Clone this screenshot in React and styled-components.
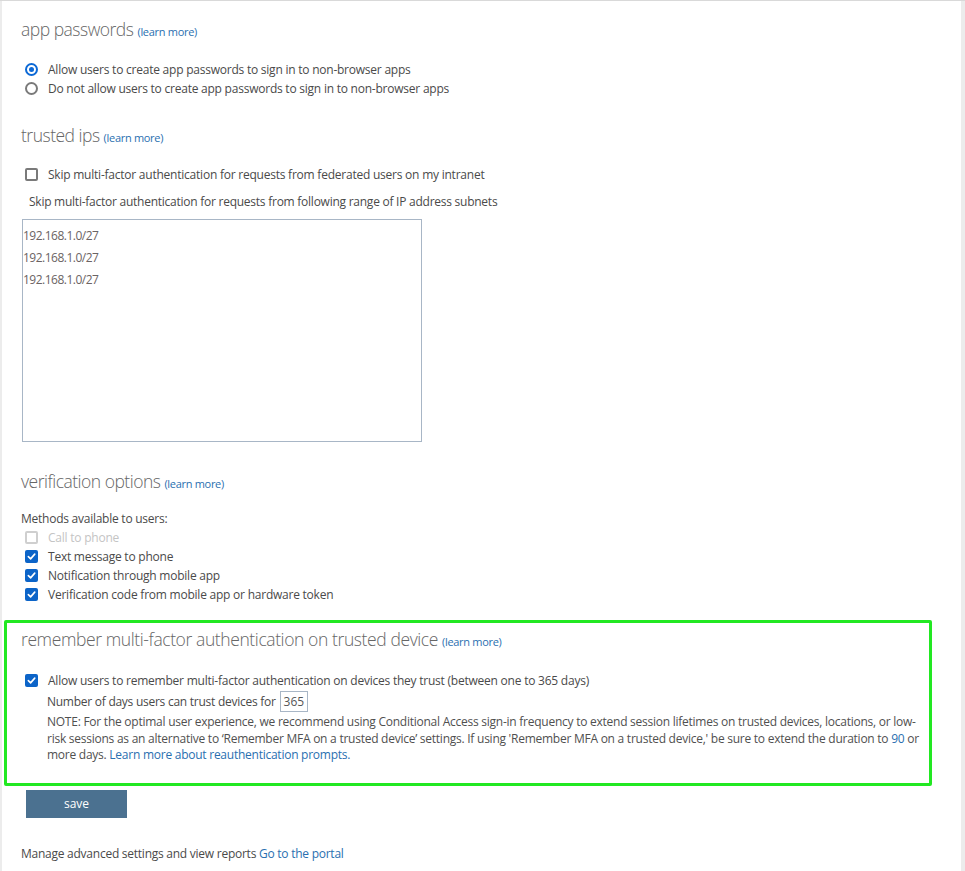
import React from "react";
import styled, { createGlobalStyle } from "styled-components";

const Global = createGlobalStyle`
  html, body { margin: 0; padding: 0; background: #fff; }
  body { font-family: "Open Sans", "Noto Sans", sans-serif; color: #4a4a4a; }
`;

const Frame = styled.div`
  display: flex;
  min-height: 871px;
  border-top: 1px solid #d9d9d9;
  box-sizing: border-box;
`;

const Main = styled.main`
  flex: 1;
  border-left: 2px solid #ececec;
  padding: 15px 29px 0 2px;
`;

const Gutter = styled.div`
  width: 4px;
  background: #ececec;
`;

const Section = styled.section`
  padding-left: 17px;
  margin-top: ${(p) => p.$top || 0}px;
`;

const Highlight = styled.section`
  border: 3px solid #22e822;
  border-radius: 2px;
  padding: 3px 0 19px 14px;
  margin-top: ${(p) => p.$top || 0}px;
`;

const Heading = styled.h2`
  margin: 0;
  font-weight: 300;
  font-size: 17.5px;
  letter-spacing: ${(p) => (p.$narrow ? -0.4 : -0.5)}px;
  line-height: 26px;
  height: 26px;
  color: #666;
`;

const Learn = styled.a`
  font-size: 11px;
  line-height: 1;
  font-weight: 400;
  letter-spacing: -0.3px;
  color: #2a6fb0;
  text-decoration: none;
  margin-left: 4px;
`;

const Group = styled.div`
  display: flex;
  flex-direction: column;
  margin-top: ${(p) => p.$top || 0}px;
`;

const Row = styled.label`
  display: flex;
  align-items: center;
  height: 19px;
  padding-left: 4px;
  font-size: 12px;
  color: ${(p) => (p.$disabled ? "#c4c4c4" : "#4a4a4a")};
`;

const Text = styled.span`
  margin-left: 10px;
  letter-spacing: -0.23px;
  white-space: nowrap;
`;

const Radio = styled.span`
  width: 13px;
  height: 13px;
  flex: none;
  box-sizing: border-box;
  border-radius: 50%;
  border: 2px solid ${(p) => (p.$on ? "#0c69d6" : "#7a7a7a")};
  display: flex;
  align-items: center;
  justify-content: center;
  &::after {
    content: "";
    width: 5px;
    height: 5px;
    border-radius: 50%;
    background: ${(p) => (p.$on ? "#0c69d6" : "transparent")};
  }
`;

const Box = styled.span`
  width: 13px;
  height: 13px;
  flex: none;
  box-sizing: border-box;
  border-radius: 2px;
  border: ${(p) => (p.$on ? "none" : `2px solid ${p.$disabled ? "#cfcfcf" : "#7a7a7a"}`)};
  background: ${(p) => (p.$on ? "#0c64c8" : "#fff")};
  display: flex;
  align-items: center;
  justify-content: center;
`;

const Check = ({ on, disabled }) => (
  <Box $on={on} $disabled={disabled}>
    {on && (
      <svg width="9" height="9" viewBox="0 0 10 10">
        <path d="M1.5 5.2 L4 7.6 L8.6 2.4" fill="none" stroke="#fff" strokeWidth="1.8" strokeLinecap="round" strokeLinejoin="round" />
      </svg>
    )}
  </Box>
);

const Plain = styled.div`
  font-size: 12px;
  line-height: 19px;
  height: 19px;
  letter-spacing: -0.25px;
  padding-left: ${(p) => p.$indent || 0}px;
  margin-top: ${(p) => p.$top || 0}px;
  color: #4a4a4a;
  white-space: nowrap;
`;

const IpList = styled.div`
  margin-top: 8px;
  margin-left: 1px;
  width: 400px;
  height: 223px;
  box-sizing: border-box;
  border: 1px solid #a8b6c6;
  padding-top: 5px;
  font-size: 12px;
  line-height: 22px;
  color: #6b6363;
  letter-spacing: -0.5px;
`;

const DaysRow = styled.div`
  display: flex;
  align-items: center;
  gap: 4px;
  height: 21px;
  margin-top: 1px;
  padding-left: 26px;
  font-size: 12px;
  letter-spacing: -0.26px;
`;

const DaysInput = styled.span`
  display: inline-block;
  height: 21px;
  box-sizing: border-box;
  border: 1px solid #a8b6c6;
  padding: 0 3px;
  line-height: 19px;
  color: #555;
  letter-spacing: 0;
`;

const Note = styled.p`
  margin: 2px 0 0 26px;
  padding-right: 2px;
  font-size: 12px;
  line-height: 16.5px;
  letter-spacing: -0.25px;
  color: #505050;
`;

const Link = styled.a`
  color: #2a6fb0;
  text-decoration: none;
`;

const SaveButton = styled.button`
  display: block;
  margin: 4px 0 0 22px;
  width: 101px;
  height: 28px;
  border: none;
  background: #4b7190;
  color: #fff;
  font-family: inherit;
  font-size: 12px;
`;

const Footer = styled.div`
  margin: 26px 0 0 17px;
  font-size: 12px;
  line-height: 19px;
  letter-spacing: -0.25px;
  color: #4a4a4a;
`;

export default function App() {
  return (
    <>
      <Global />
      <Frame>
        <Main>
          <Section>
            <Heading>
              app passwords<Learn>(learn more)</Learn>
            </Heading>
            <Group $top={18}>
              <Row>
                <Radio $on />
                <Text>Allow users to create app passwords to sign in to non-browser apps</Text>
              </Row>
              <Row>
                <Radio />
                <Text>Do not allow users to create app passwords to sign in to non-browser apps</Text>
              </Row>
            </Group>
          </Section>

          <Section $top={24}>
            <Heading>
              trusted ips<Learn>(learn more)</Learn>
            </Heading>
            <Group $top={17}>
              <Row>
                <Check />
                <Text>Skip multi-factor authentication for requests from federated users on my intranet</Text>
              </Row>
            </Group>
            <Plain $indent={8} $top={8}>
              Skip multi-factor authentication for requests from following range of IP address subnets
            </Plain>
            <IpList>
              <div>192.168.1.0/27</div>
              <div>192.168.1.0/27</div>
              <div>192.168.1.0/27</div>
            </IpList>
          </Section>

          <Section $top={26}>
            <Heading>
              verification options<Learn>(learn more)</Learn>
            </Heading>
            <Plain $top={15}>Methods available to users:</Plain>
            <Group>
              <Row $disabled>
                <Check disabled />
                <Text>Call to phone</Text>
              </Row>
              <Row>
                <Check on />
                <Text>Text message to phone</Text>
              </Row>
              <Row>
                <Check on />
                <Text>Notification through mobile app</Text>
              </Row>
              <Row>
                <Check on />
                <Text>Verification code from mobile app or hardware token</Text>
              </Row>
            </Group>
          </Section>

          <Highlight $top={16}>
            <Heading $narrow>
              remember multi-factor authentication on trusted device<Learn>(learn more)</Learn>
            </Heading>
            <Group $top={19}>
              <Row>
                <Check on />
                <Text>
                  Allow users to remember multi-factor authentication on devices they trust (between one to 365 days)
                </Text>
              </Row>
            </Group>
            <DaysRow>
              Number of days users can trust devices for
              <DaysInput>365</DaysInput>
            </DaysRow>
            <Note>
              NOTE: For the optimal user experience, we recommend using Conditional Access sign-in frequency to extend
              session lifetimes on trusted devices, locations, or low-risk sessions as an alternative to ‘Remember MFA on
              a trusted device’ settings. If using 'Remember MFA on a trusted device,' be sure to extend the duration to{" "}
              <Link>90</Link> or more days. <Link>Learn more about reauthentication prompts.</Link>
            </Note>
          </Highlight>

          <SaveButton>save</SaveButton>

          <Footer>
            Manage advanced settings and view reports <Link>Go to the portal</Link>
          </Footer>
        </Main>
        <Gutter />
      </Frame>
    </>
  );
}
